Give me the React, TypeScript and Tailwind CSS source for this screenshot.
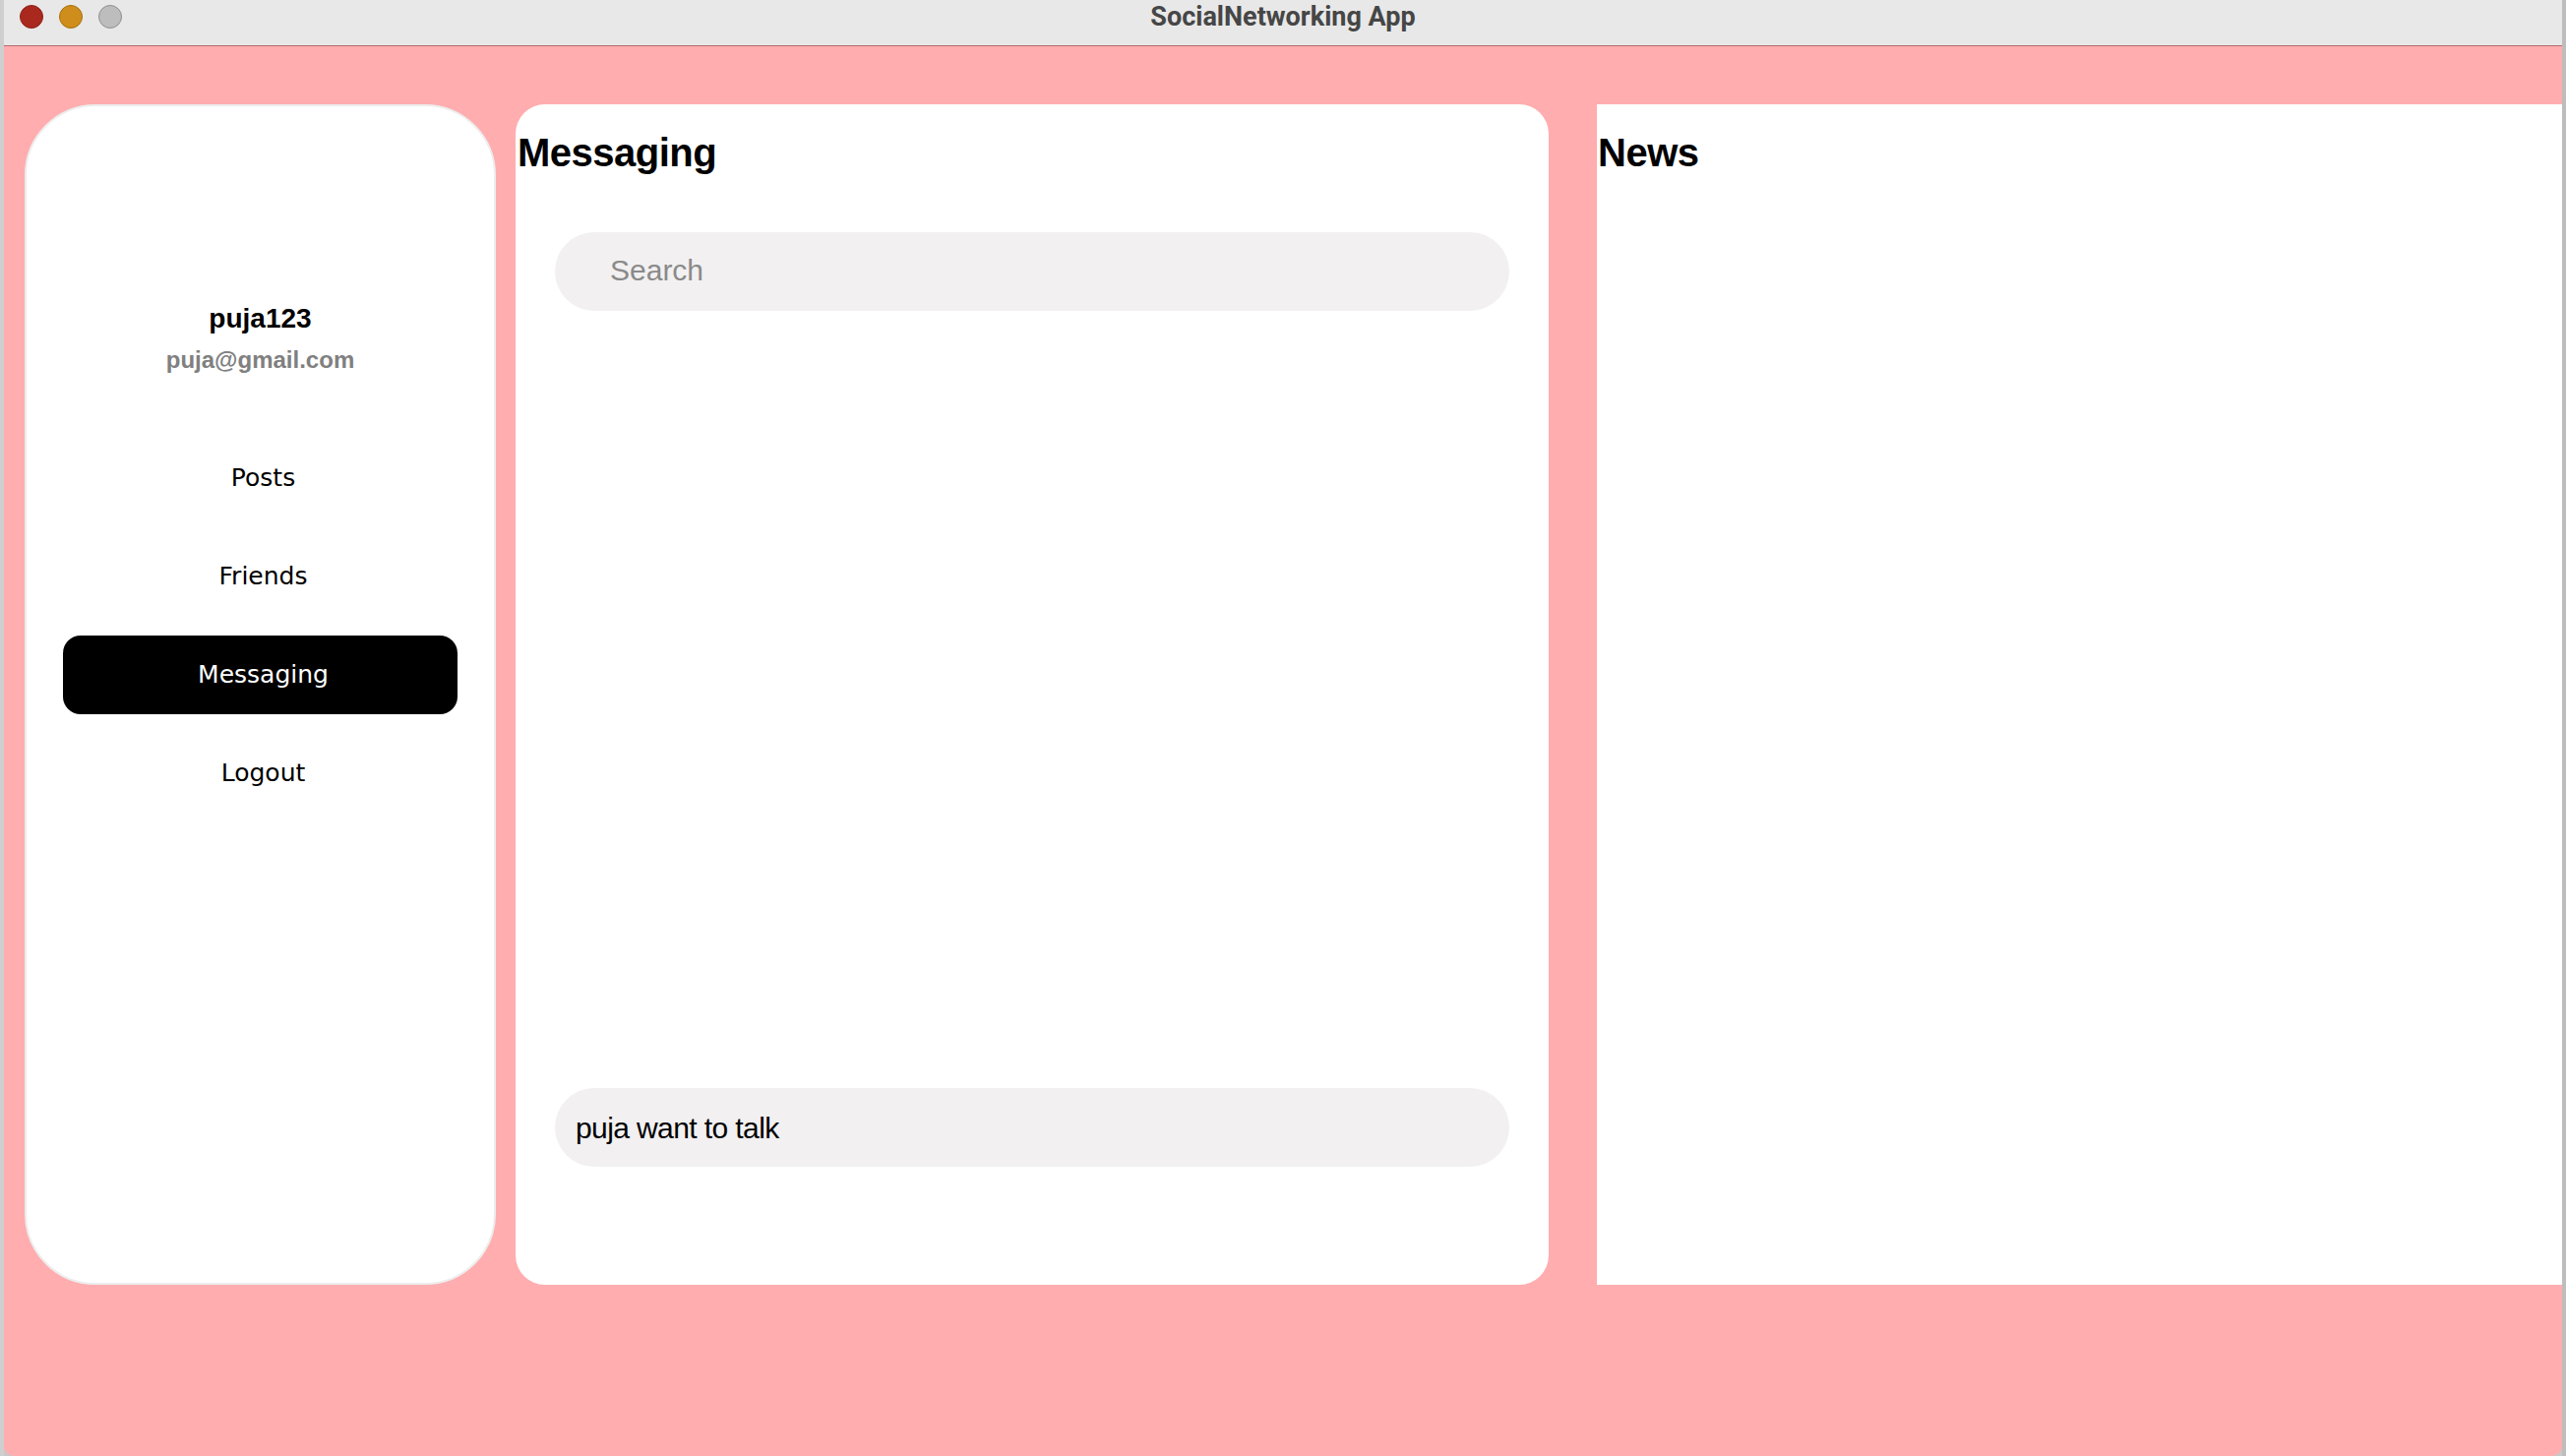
import { useState } from 'react'

const navItems = ['Posts', 'Friends', 'Messaging', 'Logout']

function TrafficLights() {
  return (
    <div className="flex items-center gap-4 pl-4">
      <span className="h-6 w-6 rounded-full border border-[#8e1f16] bg-[#a9291f]" />
      <span className="h-6 w-6 rounded-full border border-[#a8700f] bg-[#cf8d1b]" />
      <span className="h-6 w-6 rounded-full border border-[#8f8f8f] bg-[#bdbdbd]" />
    </div>
  )
}

function Sidebar({ active, onSelect }: { active: string; onSelect: (s: string) => void }) {
  return (
    <aside className="flex h-[1200px] w-[479px] shrink-0 flex-col items-center rounded-[72px] border-2 border-[#ededed] bg-white pt-[199px]">
      <div className="text-[28px] font-bold leading-[34px] text-black">puja123</div>
      <div className="mt-[10px] text-[24px] font-bold leading-[30px] text-[#808080]">puja@gmail.com</div>
      <nav className="mt-[65px] flex flex-col gap-5">
        {navItems.map((item) => (
          <button
            key={item}
            onClick={() => onSelect(item)}
            className={`flex h-20 w-[401px] items-center justify-center rounded-[18px] pl-[6px] font-['DejaVu_Sans',sans-serif] text-[25px] ${
              active === item ? 'bg-black text-white' : 'bg-white text-black'
            }`}
          >
            {item}
          </button>
        ))}
      </nav>
    </aside>
  )
}

export default function App() {
  const [active, setActive] = useState('Messaging')
  const [query, setQuery] = useState('')

  return (
    <div className="flex h-[1480px] w-full overflow-hidden bg-[#c9c9c9] font-['Liberation_Sans',Arial,sans-serif]">
      <div className="w-1 shrink-0 bg-[#cfcfcf]" />
      <div className="flex flex-1 flex-col overflow-hidden rounded-b-[10px]">
        {/* title bar */}
        <div className="relative flex h-[47px] shrink-0 items-center border-b border-[#b56b6b] bg-[#e8e8e8]">
          <div className="-mt-[12px]">
            <TrafficLights />
          </div>
          <div className="absolute inset-x-0 top-0 text-center font-['Roboto',sans-serif] text-[27px] font-bold leading-[34px] text-[#464646]">
            SocialNetworking App
          </div>
        </div>

        {/* content */}
        <div className="flex flex-1 items-start bg-[#ffadaf] pl-[21px] pt-[59px]">
          <Sidebar active={active} onSelect={setActive} />

          <section className="ml-5 flex h-[1200px] w-[1050px] shrink-0 flex-col rounded-[30px] bg-white">
            <h1 className="mt-[26px] pl-[2px] text-[40px] font-bold leading-[46px] tracking-[-0.5px] text-black">Messaging</h1>
            <div className="mt-[58px] px-10">
              <input
                value={query}
                onChange={(e) => setQuery(e.target.value)}
                placeholder="Search"
                className="h-20 w-full rounded-full bg-[#f2f0f1] pb-[2px] pl-14 text-[30px] text-black outline-none placeholder:text-[#8a8a8a]"
              />
            </div>
            <div className="mt-[790px] px-10">
              <div className="flex h-20 items-center rounded-full bg-[#f2f0f1] pl-[21px] text-[30px] tracking-[-0.6px] text-black">
                puja want to talk
              </div>
            </div>
          </section>

          <section className="ml-[49px] h-[1200px] flex-1 bg-white">
            <h1 className="mt-[26px] pl-[1px] text-[40px] font-bold leading-[46px] tracking-[-0.5px] text-black">News</h1>
          </section>
        </div>
      </div>
      <div className="w-1 shrink-0 bg-[#bdbdbd]" />
    </div>
  )
}
